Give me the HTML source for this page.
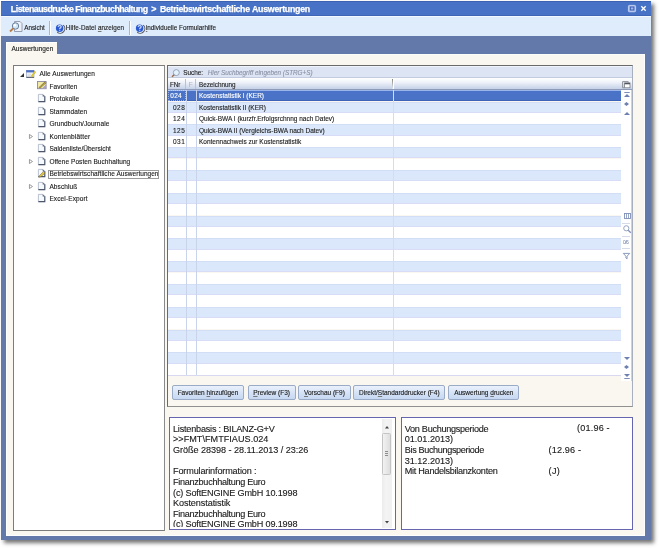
<!DOCTYPE html>
<html><head><meta charset="utf-8">
<style>
*{margin:0;padding:0;box-sizing:border-box}
html,body{width:659px;height:548px;background:#fff;overflow:hidden;position:relative;font-family:"Liberation Sans",sans-serif;color:#222}
.a{position:absolute}
#root{-webkit-text-stroke:0.12px currentColor}
#root{position:absolute;left:0;top:0;width:659px;height:548px;will-change:transform}
svg{overflow:visible}
#win{left:1px;top:1px;width:649.5px;height:538.5px;background:#6279a9;box-shadow:3px 3px 4px rgba(0,0,0,.55)}
#title{left:1px;top:1px;width:649.5px;height:15.4px;background:#4872c5;border-bottom:1px solid #3f66b6;border-top:1px solid #3c62b4}
#title .t{left:9.8px;top:2.3px;font-weight:bold;font-size:8.8px;letter-spacing:-0.333px;color:#fff;white-space:nowrap;line-height:10px;-webkit-text-stroke:0.25px #fff}
#tb{left:1px;top:16.4px;width:649.5px;height:19.2px;background:#dfecfb;border-top:1px solid #f4f9ff}
u{text-decoration-thickness:0.5px;text-underline-offset:1px;text-decoration-color:#777}
.tbt{font-size:6.3px;color:#1a1a1a;white-space:nowrap;line-height:8px}
.sep{width:1px;background:#a9b6c8;border-right:1px solid #fff;width:2px}
#content{left:6.3px;top:54px;width:638.5px;height:482px;background:#f9f7ef;border-left:1px solid #fdfeff;border-right:1px solid #fdfeff;border-bottom:1px solid #fdfeff;border-top:1px solid #fdfdf8}
#tab{left:6.4px;top:42px;width:50.8px;height:13px;background:#f9f7ef;border-top:1px solid #fff;border-left:1px solid #fff}
#tab .t{left:4.1px;top:2.1px;font-size:6.5px;color:#1a1a1a;line-height:8px;letter-spacing:0.02px}
#tree{left:13px;top:65px;width:151.5px;height:466px;background:#fff;border:1px solid #7c7c7c;border-right-color:#8a8a8a}
.tr{font-size:6.5px;color:#1a1a1a;white-space:nowrap;line-height:8px}
#focus{left:47.8px;top:169.7px;width:111.5px;height:9.2px;border:1px solid #9a9a9a}
#grid{left:167px;top:65px;width:465.5px;height:341.5px;border:1px solid #6a6a6a;border-right-color:#a8b0c0;border-bottom-color:#909090;background:#f9f7ef}
#search{left:168px;top:66px;width:463.5px;height:11.5px;background:#dde5f4;border-top:1px solid #f0f4fc;border-bottom:1px solid #c2cbe0}
#search .l{left:15.2px;top:2.1px;font-size:6.4px;color:#222;line-height:8px}
#search .p{left:39.7px;top:2.1px;font-size:6.35px;color:#8a92a6;font-style:italic;line-height:8px;white-space:nowrap}
#hdr{left:168px;top:77.5px;width:463.5px;height:12.2px;background:linear-gradient(#ffffff 0%,#f1f4fa 35%,#c5d1e8 100%);border-bottom:1px solid #8e9bb8}
#hdr .h{top:3.2px;font-size:6.3px;color:#222;line-height:8px;white-space:nowrap}
.vd{width:1px;background:#b9c2d4}
#rows{left:168px;top:0;width:453.9px;height:375.5px;overflow:hidden}
.row{left:0;width:453.9px;height:11.4px}
.sel{background:#4a73c7;color:#fff;box-shadow:inset 0 1px 0 #9ab4ec,inset 0 -1px 0 #3d63b8}
.lt{background:#dbe8fb;box-shadow:inset 0 1px 0 #d2def6,inset 0 -1px 0 #d8dcf6}
.wt{background:#fff}
.rn,.rn0,.rt{top:2.4px;font-size:6.5px;line-height:8px;white-space:nowrap}
.rn{left:3px;width:14.4px;text-align:right;letter-spacing:0.55px}
.rn0{left:2.2px;letter-spacing:0.35px}
.rt{left:31px}
#nav{left:621.4px;top:89.7px;width:10.5px;height:291px;background:#fff;border-right:1px solid #c5d3ee}
.btn{top:385.2px;height:14.4px;border:1px solid #9aabc8;border-radius:2px;background:linear-gradient(#eaf1fc,#d3e1f6 60%,#c6d8f2);font-size:6.5px;color:#1a1a1a;text-align:center;line-height:13px;white-space:nowrap}
.ip{border:1px solid #6565b0;background:#fff;font-size:8.5px;color:#1a1a1a;white-space:nowrap;line-height:10.5px;overflow:hidden}
.ico{fill:#6d80b0}
.il{font-size:9.1px;line-height:10px;white-space:nowrap}
</style></head><body><div id="root">
<div id="win" class="a"></div>
<div id="title" class="a"><div class="t a" style="letter-spacing:-0.49px">Listenausdrucke Finanzbuchhaltung</div><div class="t a" style="left:150.2px;letter-spacing:0">&gt;</div><div class="t a" style="left:158.9px;letter-spacing:-0.3px">Betriebswirtschaftliche</div><div class="t a" style="left:251px;letter-spacing:-0.27px">Auswertungen</div>
<svg class="a" style="left:627px;top:3.2px" width="8" height="7.2" viewBox="0 0 8 7.2"><rect x="0.4" y="0.4" width="7.2" height="6.4" rx="1" fill="#a4b8e8" stroke="#d4def6" stroke-width="0.8"/><rect x="2.3" y="2" width="3.6" height="3" fill="none" stroke="#3458b0" stroke-width="0.9"/></svg>
<svg class="a" style="left:639.7px;top:4.3px" width="5" height="5" viewBox="0 0 5 5"><path d="M0.3 0.3L4.7 4.7M4.7 0.3L0.3 4.7" stroke="#fff" stroke-width="1.3"/></svg>
</div>
<div id="tb" class="a">
 <svg class="a" style="left:8px;top:4px" width="14" height="12" viewBox="0 0 14 12"><path d="M5.5 0.5H11L13 2.5V10.5H5.5Z" fill="#eef2f8" stroke="#8c95a8" stroke-width="0.9"/><circle cx="6.5" cy="5" r="3.2" fill="#cfe6f8" stroke="#6d7f98" stroke-width="1"/><circle cx="5.8" cy="4.3" r="1.2" fill="#fff"/><path d="M4.3 7.3L1 10.5" stroke="#b77a44" stroke-width="1.8"/></svg>
 <div class="a tbt" style="left:23.2px;top:6.9px">Ansicht</div>
 <div class="a sep" style="left:48.2px;top:3.2px;height:14px"></div>
 <svg class="a" style="left:53.9px;top:6.5px" width="10" height="9" viewBox="0 0 10 9"><path d="M8.2 1.2A4.3 4.3 0 0 1 2.2 8.2" fill="none" stroke="#5a5a64" stroke-width="1.1"/><circle cx="4.6" cy="4.2" r="3.7" fill="#2a58d0"/><path d="M3.1 2.9Q3.3 1.5 4.7 1.5Q6.2 1.6 6.1 2.9Q6 3.9 4.8 4.3V5.2" fill="none" stroke="#d8e4ff" stroke-width="1.1"/><circle cx="4.8" cy="6.6" r="0.6" fill="#d8e4ff"/></svg>
 <div class="a tbt" style="left:64.8px;top:6.9px;letter-spacing:0.08px">Hilfe-Datei <u>a</u>nzeigen</div>
 <div class="a sep" style="left:127.5px;top:3.2px;height:14px"></div>
 <svg class="a" style="left:133.7px;top:6.5px" width="10" height="9" viewBox="0 0 10 9"><path d="M8.2 1.2A4.3 4.3 0 0 1 2.2 8.2" fill="none" stroke="#5a5a64" stroke-width="1.1"/><circle cx="4.6" cy="4.2" r="3.7" fill="#2a58d0"/><path d="M3.1 2.9Q3.3 1.5 4.7 1.5Q6.2 1.6 6.1 2.9Q6 3.9 4.8 4.3V5.2" fill="none" stroke="#d8e4ff" stroke-width="1.1"/><circle cx="4.8" cy="6.6" r="0.6" fill="#d8e4ff"/></svg>
 <div class="a tbt" style="left:144.9px;top:6.9px;letter-spacing:0.02px"><u>i</u>ndividuelle Formularhilfe</div>
</div>
<div id="content" class="a"></div>
<div id="tab" class="a"><div class="t a">Auswertungen</div></div>
<div id="tree" class="a"></div>
<div class="a tr" style="left:39.5px;top:70.0px;letter-spacing:0.1px">Alle Auswertungen</div>
<svg class="a" style="left:26.3px;top:69.5px" width="10" height="8" viewBox="0 0 10 8"><rect x="0.4" y="0.4" width="7.6" height="7" fill="#f2f4f8" stroke="#9aa8c0" stroke-width="0.7"/><rect x="0.2" y="0.2" width="8" height="2.2" fill="#4c6fc4"/><path d="M0.4 7.3H8" stroke="#3e4658" stroke-width="0.9"/><path d="M1.5 4.2H5M1.5 5.6H4.5" stroke="#c8ccd6" stroke-width="0.6"/><path d="M5.3 7L9.3 1.6" stroke="#c8b020" stroke-width="1.7"/><path d="M5.3 7L9.3 1.6" stroke="#f0e060" stroke-width="0.6"/></svg>
<svg class="a" style="left:19.5px;top:72.5px" width="4" height="4" viewBox="0 0 4 4"><path d="M0 4H4V0Z" fill="#333"/></svg>
<div class="a tr" style="left:49.4px;top:82.5px;letter-spacing:0.12px">Favoriten</div>
<svg class="a" style="left:36.5px;top:81.2px" width="10" height="8" viewBox="0 0 10 8"><rect x="0.5" y="0.5" width="8.6" height="7.2" fill="#f3eaa8" stroke="#8c88a4" stroke-width="0.9"/><path d="M5 7.6L9.1 3.5V7.6Z" fill="#a8a0c8"/><path d="M2.2 7.2L8.8 1" stroke="#6a6040" stroke-width="1.8"/><path d="M2.2 7.2L8.8 1" stroke="#e8d040" stroke-width="0.9"/></svg>
<div class="a tr" style="left:49.4px;top:95.0px;letter-spacing:0.08px">Protokolle</div>
<svg class="a" style="left:37.7px;top:94.1px" width="7.4" height="8.2" viewBox="0 0 7.4 8.2"><path d="M0.4 0.4H4.9L6.8 2.3V7.6H0.4Z" fill="#f6f9fd" stroke="#aab2c4" stroke-width="0.8"/><path d="M6.8 2.3V7.6H0.4" fill="none" stroke="#4e566c" stroke-width="1.1"/><path d="M4.7 0.3L7 2.6H4.7Z" fill="#5a6278"/></svg>
<div class="a tr" style="left:49.4px;top:107.5px;letter-spacing:0.1px">Stammdaten</div>
<svg class="a" style="left:37.7px;top:106.6px" width="7.4" height="8.2" viewBox="0 0 7.4 8.2"><path d="M0.4 0.4H4.9L6.8 2.3V7.6H0.4Z" fill="#f6f9fd" stroke="#aab2c4" stroke-width="0.8"/><path d="M6.8 2.3V7.6H0.4" fill="none" stroke="#4e566c" stroke-width="1.1"/><path d="M4.7 0.3L7 2.6H4.7Z" fill="#5a6278"/></svg>
<div class="a tr" style="left:49.4px;top:120.0px;letter-spacing:0.06px">Grundbuch/Journale</div>
<svg class="a" style="left:37.7px;top:119.1px" width="7.4" height="8.2" viewBox="0 0 7.4 8.2"><path d="M0.4 0.4H4.9L6.8 2.3V7.6H0.4Z" fill="#f6f9fd" stroke="#aab2c4" stroke-width="0.8"/><path d="M6.8 2.3V7.6H0.4" fill="none" stroke="#4e566c" stroke-width="1.1"/><path d="M4.7 0.3L7 2.6H4.7Z" fill="#5a6278"/></svg>
<div class="a tr" style="left:49.4px;top:132.5px;letter-spacing:0.18px">Kontenblätter</div>
<svg class="a" style="left:37.7px;top:131.6px" width="7.4" height="8.2" viewBox="0 0 7.4 8.2"><path d="M0.4 0.4H4.9L6.8 2.3V7.6H0.4Z" fill="#f6f9fd" stroke="#aab2c4" stroke-width="0.8"/><path d="M6.8 2.3V7.6H0.4" fill="none" stroke="#4e566c" stroke-width="1.1"/><path d="M4.7 0.3L7 2.6H4.7Z" fill="#5a6278"/></svg>
<svg class="a" style="left:28.8px;top:133.7px" width="4" height="5" viewBox="0 0 4 5"><path d="M0.45 0.45L3.5 2.5L0.45 4.55Z" fill="#fff" stroke="#8a8a8a" stroke-width="0.85"/></svg>
<div class="a tr" style="left:49.4px;top:145.0px;letter-spacing:0.02px">Saldenliste/Übersicht</div>
<svg class="a" style="left:37.7px;top:144.1px" width="7.4" height="8.2" viewBox="0 0 7.4 8.2"><path d="M0.4 0.4H4.9L6.8 2.3V7.6H0.4Z" fill="#f6f9fd" stroke="#aab2c4" stroke-width="0.8"/><path d="M6.8 2.3V7.6H0.4" fill="none" stroke="#4e566c" stroke-width="1.1"/><path d="M4.7 0.3L7 2.6H4.7Z" fill="#5a6278"/></svg>
<div class="a tr" style="left:49.4px;top:157.5px;letter-spacing:0.06px">Offene Posten Buchhaltung</div>
<svg class="a" style="left:37.7px;top:156.6px" width="7.4" height="8.2" viewBox="0 0 7.4 8.2"><path d="M0.4 0.4H4.9L6.8 2.3V7.6H0.4Z" fill="#f6f9fd" stroke="#aab2c4" stroke-width="0.8"/><path d="M6.8 2.3V7.6H0.4" fill="none" stroke="#4e566c" stroke-width="1.1"/><path d="M4.7 0.3L7 2.6H4.7Z" fill="#5a6278"/></svg>
<svg class="a" style="left:28.8px;top:158.7px" width="4" height="5" viewBox="0 0 4 5"><path d="M0.45 0.45L3.5 2.5L0.45 4.55Z" fill="#fff" stroke="#8a8a8a" stroke-width="0.85"/></svg>
<div class="a tr" style="left:49.4px;top:170.0px;letter-spacing:0.04px">Betriebswirtschaftliche Auswertungen</div>
<svg class="a" style="left:37.7px;top:169.1px" width="7.4" height="8.2" viewBox="0 0 7.4 8.2"><path d="M0.4 0.4H4.9L6.8 2.3V7.6H0.4Z" fill="#f6f9fd" stroke="#aab2c4" stroke-width="0.8"/><path d="M6.8 2.3V7.6H0.4" fill="none" stroke="#4e566c" stroke-width="1.1"/><path d="M4.7 0.3L7 2.6H4.7Z" fill="#5a6278"/></svg><svg class="a" style="left:37.6px;top:170.7px" width="8" height="7" viewBox="0 0 8 7"><path d="M0.8 6.2L1.6 4.4L5.6 0.6L7 2L3 5.6Z" fill="#e8cc40" stroke="#7a6a30" stroke-width="0.6"/></svg>
<div class="a tr" style="left:49.4px;top:182.5px;letter-spacing:0.12px">Abschluß</div>
<svg class="a" style="left:37.7px;top:181.6px" width="7.4" height="8.2" viewBox="0 0 7.4 8.2"><path d="M0.4 0.4H4.9L6.8 2.3V7.6H0.4Z" fill="#f6f9fd" stroke="#aab2c4" stroke-width="0.8"/><path d="M6.8 2.3V7.6H0.4" fill="none" stroke="#4e566c" stroke-width="1.1"/><path d="M4.7 0.3L7 2.6H4.7Z" fill="#5a6278"/></svg>
<svg class="a" style="left:28.8px;top:183.7px" width="4" height="5" viewBox="0 0 4 5"><path d="M0.45 0.45L3.5 2.5L0.45 4.55Z" fill="#fff" stroke="#8a8a8a" stroke-width="0.85"/></svg>
<div class="a tr" style="left:49.4px;top:195.0px;letter-spacing:0.12px">Excel-Export</div>
<svg class="a" style="left:37.7px;top:194.1px" width="7.4" height="8.2" viewBox="0 0 7.4 8.2"><path d="M0.4 0.4H4.9L6.8 2.3V7.6H0.4Z" fill="#f6f9fd" stroke="#aab2c4" stroke-width="0.8"/><path d="M6.8 2.3V7.6H0.4" fill="none" stroke="#4e566c" stroke-width="1.1"/><path d="M4.7 0.3L7 2.6H4.7Z" fill="#5a6278"/></svg>
<div id="focus" class="a"></div>
<div id="grid" class="a"></div>
<div id="search" class="a">
 <svg class="a" style="left:2.5px;top:1.6px" width="9" height="8" viewBox="0 0 9 8"><circle cx="5.3" cy="3.6" r="3" fill="#e4f2fc" stroke="#8d9cb4" stroke-width="0.9"/><path d="M3.2 5.7L0.9 7.7" stroke="#9a6a40" stroke-width="1.5"/></svg>
 <div class="a l">Suche:</div>
 <div class="a p">Hier Suchbegriff eingeben (STRG+S)</div>
</div>
<div id="hdr" class="a">
 <div class="a h" style="left:1.9px">FNr</div>
 <div class="a vd" style="left:17.4px;top:1px;height:10px"></div>
 <div class="a h" style="left:20.7px;color:#b0b4c0">F</div>
 <div class="a vd" style="left:27.3px;top:1px;height:10px"></div>
 <div class="a h" style="left:31px">Bezeichnung</div>
 <div class="a vd" style="left:224.2px;top:1.5px;height:10px;background:linear-gradient(#8a8a74,#c8ccd4 70%,#e0e4f0);border-right:1px solid #fff;width:2px;background-clip:padding-box"></div>
 <svg class="a" style="left:453.8px;top:3.3px" width="8.5" height="7.2" viewBox="0 0 8.5 7.2"><path d="M0.6 0.6H6.2V1.6M0.6 0.6V6.8H2.4" fill="none" stroke="#85888f" stroke-width="0.9"/><rect x="2.6" y="1.9" width="5.4" height="4.9" fill="#fff" stroke="#7a7d86" stroke-width="0.8"/><rect x="2.6" y="1.9" width="5.4" height="1.4" fill="#55575e"/></svg>
</div>
<div id="rows" class="a">
<div class="a row sel" style="top:90.10px"><div class="a rn0">024</div><div class="a rt">Kostenstatistik I (KER)</div></div>
<div class="a row lt" style="top:101.50px"><div class="a rn">028</div><div class="a rt">Kostenstatistik II (KER)</div></div>
<div class="a row wt" style="top:112.90px"><div class="a rn">124</div><div class="a rt">Quick-BWA I (kurzfr.Erfolgsrchnng nach Datev)</div></div>
<div class="a row lt" style="top:124.30px"><div class="a rn">125</div><div class="a rt">Quick-BWA II (Vergleichs-BWA nach Datev)</div></div>
<div class="a row wt" style="top:135.70px"><div class="a rn">031</div><div class="a rt">Kontennachweis zur Kostenstatistik</div></div>
<div class="a row lt" style="top:147.10px"></div>
<div class="a row wt" style="top:158.50px"></div>
<div class="a row lt" style="top:169.90px"></div>
<div class="a row wt" style="top:181.30px"></div>
<div class="a row lt" style="top:192.70px"></div>
<div class="a row wt" style="top:204.10px"></div>
<div class="a row lt" style="top:215.50px"></div>
<div class="a row wt" style="top:226.90px"></div>
<div class="a row lt" style="top:238.30px"></div>
<div class="a row wt" style="top:249.70px"></div>
<div class="a row lt" style="top:261.10px"></div>
<div class="a row wt" style="top:272.50px"></div>
<div class="a row lt" style="top:283.90px"></div>
<div class="a row wt" style="top:295.30px"></div>
<div class="a row lt" style="top:306.70px"></div>
<div class="a row wt" style="top:318.10px"></div>
<div class="a row lt" style="top:329.50px"></div>
<div class="a row wt" style="top:340.90px"></div>
<div class="a row lt" style="top:352.30px"></div>
<div class="a row wt" style="top:363.70px"></div>
<div class="a vd" style="left:18px;top:90px;height:285.5px;background:#c9d4ea"></div>
<div class="a vd" style="left:28px;top:90px;height:285.5px;background:#c9d4ea"></div>
<div class="a vd" style="left:224.6px;top:90px;height:285.5px;background:#d4dcee"></div>
<div class="a" style="left:0;top:374.5px;width:453.4px;height:1px;background:#d8d8f0"></div>
<div class="a" style="left:0;top:90.1px;width:18px;height:11.4px;border:1px dotted rgba(220,230,255,.55)"></div>
</div>
<div id="nav" class="a">
 <svg class="a" style="left:2.3px;top:2.3px" width="6" height="5" viewBox="0 0 6 5"><rect x="0.3" y="0" width="5.4" height="0.9" class="ico"/><path d="M0 5L3 2L6 5Z" class="ico"/></svg>
 <svg class="a" style="left:2.8px;top:12.5px" width="5" height="4" viewBox="0 0 5 4"><path d="M2.5 0L5 2L2.5 4L0 2Z" class="ico"/></svg>
 <svg class="a" style="left:2.5px;top:22px" width="6" height="3" viewBox="0 0 6 3"><path d="M0 3L3 0L6 3Z" class="ico"/></svg>
 <svg class="a" style="left:2.2px;top:123.5px" width="7" height="6" viewBox="0 0 7 6"><rect x="0.5" y="0.5" width="6" height="5" fill="none" stroke="#7f90b8" stroke-width="0.9"/><path d="M2.5 0.5V5.5M4.5 0.5V5.5" stroke="#7f90b8" stroke-width="0.8"/></svg>
 <div class="a" style="left:1px;top:133px;width:8px;height:1px;background:#d5dbe8"></div>
 <svg class="a" style="left:1.8px;top:135.8px" width="8" height="8" viewBox="0 0 8 8"><circle cx="3.3" cy="3.3" r="2.6" fill="none" stroke="#8a98b8" stroke-width="0.9"/><path d="M5.2 5.2L7.8 7.8" stroke="#7f90b8" stroke-width="1.3"/></svg>
 <div class="a" style="left:1px;top:146px;width:8px;height:1px;background:#d5dbe8"></div>
 <div class="a" style="left:1.5px;top:149.2px;font-size:5px;color:#8a98b8;line-height:6px;letter-spacing:-0.5px">0/6</div>
 <div class="a" style="left:1px;top:158.8px;width:8px;height:1px;background:#d5dbe8"></div>
 <svg class="a" style="left:2px;top:163.3px" width="7" height="6" viewBox="0 0 7 6"><path d="M0.3 0.4H6.7L4.1 3.2V5.8L2.9 5V3.2Z" fill="none" stroke="#7f90b8" stroke-width="0.9"/></svg>
 <svg class="a" style="left:2.5px;top:267.5px" width="6" height="3" viewBox="0 0 6 3"><path d="M0 0L3 3L6 0Z" class="ico"/></svg>
 <svg class="a" style="left:2.8px;top:275.8px" width="5" height="4" viewBox="0 0 5 4"><path d="M2.5 0L5 2L2.5 4L0 2Z" class="ico"/></svg>
 <svg class="a" style="left:2.3px;top:284px" width="6" height="5" viewBox="0 0 6 5"><path d="M0 0L3 3L6 0Z" class="ico"/><rect x="0.3" y="4.1" width="5.4" height="0.9" class="ico"/></svg>
</div>
<div class="a btn" style="left:171.6px;width:72.8px">Favoriten <u>h</u>inzufügen</div>
<div class="a btn" style="left:247.6px;width:48px"><u>P</u>review (F3)</div>
<div class="a btn" style="left:298.3px;width:52.3px"><u>V</u>orschau (F9)</div>
<div class="a btn" style="left:353.2px;width:92.3px">Direkt/<u>S</u>tandarddrucker (F4)</div>
<div class="a btn" style="left:448.3px;width:71px">Auswertung <u>d</u>rucken</div>
<div class="a ip" style="left:169px;top:417.4px;width:226.5px;height:113px"><div class="a" style="left:0;top:0;width:211px;height:108.6px;overflow:hidden">
 <div class="a il" style="left:3.0px;top:5.40px;letter-spacing:-0.204px">Listenbasis : BILANZ-G+V</div>
 <div class="a il" style="left:3.0px;top:16.02px;letter-spacing:0.024px">&gt;&gt;FMT\FMTFIAUS.024</div>
 <div class="a il" style="left:3.0px;top:26.64px;letter-spacing:-0.053px">Größe 28398 - 28.11.2013 / 23:26</div>
 <div class="a il" style="left:3.0px;top:47.88px;letter-spacing:-0.146px">Formularinformation :</div>
 <div class="a il" style="left:3.0px;top:58.50px;letter-spacing:-0.285px">Finanzbuchhaltung Euro</div>
 <div class="a il" style="left:3.0px;top:69.12px;letter-spacing:-0.149px">(c) SoftENGINE GmbH 10.1998</div>
 <div class="a il" style="left:3.0px;top:79.74px;letter-spacing:-0.088px">Kostenstatistik</div>
 <div class="a il" style="left:3.0px;top:90.36px;letter-spacing:-0.285px">Finanzbuchhaltung Euro</div>
 <div class="a il" style="left:3.0px;top:100.98px;letter-spacing:-0.149px">(c) SoftENGINE GmbH 09.1998</div>
</div>
 <div class="a" style="left:212px;top:0.5px;width:10px;height:109.5px;background:linear-gradient(90deg,#ececec,#f4f4f4 40%,#f0f0f0)"></div>
 <svg class="a" style="left:215.3px;top:7.5px" width="4" height="2.5" viewBox="0 0 4 2.5"><path d="M0 2.5L2 0L4 2.5Z" fill="#444"/></svg>
 <div class="a" style="left:212.4px;top:15px;width:8.6px;height:41.3px;border:1px solid #c4c4c4;border-radius:1.5px;background:linear-gradient(90deg,#f2f2f2,#dedede)"></div>
 <div class="a" style="left:214.6px;top:32.6px;width:3.6px;height:1px;background:#8c8c8c"></div>
 <div class="a" style="left:214.6px;top:34.6px;width:3.6px;height:1px;background:#8c8c8c"></div>
 <div class="a" style="left:214.6px;top:36.6px;width:3.6px;height:1px;background:#8c8c8c"></div>
 <svg class="a" style="left:215.3px;top:102.5px" width="4" height="2.5" viewBox="0 0 4 2.5"><path d="M0 0L2 2.5L4 0Z" fill="#444"/></svg>
</div>
<div class="a ip" style="left:400.5px;top:417.4px;width:232.5px;height:113px">
 <div class="a il" style="left:3.30px;top:5.50px;letter-spacing:-0.288px">Von Buchungsperiode</div>
 <div class="a il" style="left:3.30px;top:15.50px;letter-spacing:-0.034px">01.01.2013)</div>
 <div class="a il" style="left:3.30px;top:26.40px;letter-spacing:-0.358px">Bis Buchungsperiode</div>
 <div class="a il" style="left:3.30px;top:37.20px;letter-spacing:-0.034px">31.12.2013)</div>
 <div class="a il" style="left:3.30px;top:47.70px;letter-spacing:-0.280px">Mit Handelsbilanzkonten</div>
 <div class="a il" style="left:175.60px;top:5.10px;letter-spacing:0.167px">(01.96 -</div>
 <div class="a il" style="left:147.10px;top:26.60px;letter-spacing:0.152px">(12.96 -</div>
 <div class="a il" style="left:147.10px;top:47.80px;letter-spacing:0.300px">(J)</div>
</div>
</div></body></html>
